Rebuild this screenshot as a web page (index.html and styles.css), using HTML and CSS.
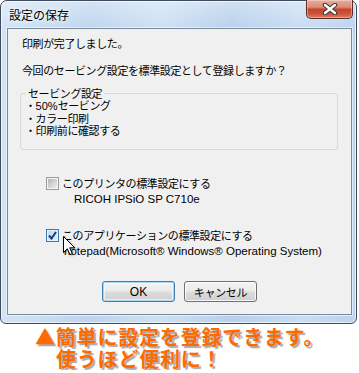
FILE: index.html
```html
<!DOCTYPE html>
<html lang="ja">
<head>
<meta charset="utf-8">
<title>設定の保存</title>
<link rel="stylesheet" href="styles.css">
</head>
<body>
<div class="window">
  <div class="titlebar">
    <span class="title">設定の保存</span>
    <div class="close">
      <svg width="16" height="12" viewBox="0 0 16 12"><path d="M3 2 L13 10 M13 2 L3 10" stroke="#3a3a3a" stroke-width="4.5" stroke-linecap="round"/><path d="M3 2 L13 10 M13 2 L3 10" stroke="#fff" stroke-width="2.4" stroke-linecap="round"/></svg>
    </div>
  </div>
  <div class="panel">
    <p class="msg msg1">印刷が完了しました。</p>
    <p class="msg msg2">今回のセービング設定を標準設定として登録しますか？</p>
    <fieldset class="group">
      <legend>セービング設定</legend>
      <div class="item">・<span class="lat">50%</span>セービング</div>
      <div class="item">・カラー印刷</div>
      <div class="item">・印刷前に確認する</div>
    </fieldset>
    <div class="check-row r1"><span class="box off"></span><span>このプリンタの標準設定にする</span></div>
    <div class="sub sub1">RICOH IPSiO SP C710e</div>
    <div class="check-row r2"><span class="box on"><svg width="9" height="9" viewBox="0 0 9 9"><path d="M1 4.5 L3.5 7.5 L8 1" fill="none" stroke="#1c3a7c" stroke-width="2"/></svg></span><span>このアプリケーションの標準設定にする</span></div>
    <div class="sub sub2">notepad(Microsoft® Windows® Operating System)</div>
    <div class="buttons">
      <button class="btn default">OK</button>
      <button class="btn">キャンセル</button>
    </div>
    <svg class="cursor" width="14" height="21" viewBox="0 0 14 21"><path d="M1.5 1.5 L1.5 17.5 L5.3 13.8 L8 19.5 L10.3 18.5 L7.7 12.8 L12.8 12.8 Z" fill="#fff" stroke="#000" stroke-width="1" stroke-linejoin="miter"/></svg>
  </div>
</div>
<div class="caption">
  <div class="line1">▲簡単に設定を登録できます。</div>
  <div class="line2">使うほど便利に！</div>
</div>
</body>
</html>
```

FILE: styles.css
```css
html, body {
  margin: 0;
  padding: 0;
  background: #fff;
}

body {
  font-family: "Noto Sans CJK JP", "Noto Sans", sans-serif;
  color: #000;
}

.window {
  position: relative;
  width: 357px;
  box-sizing: border-box;
  border: 1px solid #3f4b5c;
  border-radius: 7px 7px 6px 6px;
  padding: 0 4px 8px 6px;
  background:
    linear-gradient(180deg, rgba(255,255,255,0.35), rgba(255,255,255,0) 28px),
    linear-gradient(90deg, #d3e3f5 0%, #bed5ee 25%, #cde0f4 45%, #b8d0eb 65%, #c9ddf3 85%, #bcd3ee 100%);
  box-shadow: inset 0 0 0 1px rgba(255,255,255,0.65);
}

.titlebar {
  height: 27px;
  display: flex;
  align-items: flex-start;
  justify-content: space-between;
}

.title {
  margin-top: 6px;
  padding-left: 2px;
  font-size: 12px;
  line-height: 16px;
  letter-spacing: 0;
  text-shadow: 0 0 6px #fff, 0 0 3px #fff;
}

.close {
  width: 47px;
  height: 19px;
  box-sizing: border-box;
  margin-top: -1px;
  margin-right: -1px;
  border: 1px solid #5a2d2a;
  border-top: none;
  border-radius: 0 0 5px 5px;
  background: linear-gradient(180deg, #e9ab9b 0%, #dc8b77 40%, #c6432f 52%, #cb5238 75%, #dc7a5e 100%);
  box-shadow: inset 0 0 0 1px rgba(255,255,255,0.35);
  display: flex;
  align-items: center;
  justify-content: center;
}

.panel {
  position: relative;
  background: #f0f0f0;
  border: 1px solid #7b8a9b;
  box-shadow: 0 0 0 1px rgba(255,255,255,0.55);
  padding: 7px 0 12px 0;
  font-size: 11px;
  letter-spacing: -0.4px;
}

.msg {
  margin: 0;
  padding-left: 14px;
  line-height: 14px;
}

.msg2 {
  margin-top: 13px;
}

.group {
  margin: 10px 13px 0 12px;
  padding: 0 0 13px 4px;
  border: 1px solid #d3dae0;
  border-radius: 3px;
  min-width: 0;
}

.group legend {
  padding: 0 2px;
  margin-left: 1px;
  line-height: 12px;
  font-size: 11px;
}

.item {
  line-height: 12px;
}

.lat {
  letter-spacing: 0;
  font-family: "Liberation Sans", sans-serif;
}

.check-row {
  display: flex;
  align-items: center;
  gap: 3px;
  padding-left: 38px;
  line-height: 14px;
  height: 14px;
}

.r1 {
  margin-top: 26px;
}

.r2 {
  margin-top: 22px;
}

.box {
  width: 13px;
  height: 13px;
  box-sizing: border-box;
  display: flex;
  align-items: center;
  justify-content: center;
  flex: none;
}

.box.off {
  border: 1px solid #9a9a9a;
  box-shadow: inset 0 0 0 1px #f6f6f6;
  background: linear-gradient(135deg, #a9adb1 0%, #d8d8d8 60%, #eeeeee 100%);
}

.box.on {
  border: 1px solid #3b78b0;
  box-shadow: inset 0 0 0 1px #e8f4fb;
  background: linear-gradient(135deg, #b9dcf3 0%, #def0fb 100%);
}

.sub {
  margin-top: 2px;
  line-height: 14px;
  letter-spacing: 0;
  font-family: "Liberation Sans", sans-serif;
  font-size: 11.5px;
}

.sub1 {
  padding-left: 66px;
}

.sub2 {
  padding-left: 56px;
}

.buttons {
  margin-top: 23px;
  display: flex;
  justify-content: center;
  gap: 9px;
}

.btn {
  width: 73px;
  height: 21px;
  box-sizing: border-box;
  margin: 0;
  padding: 0;
  border: 1px solid #707070;
  border-radius: 3px;
  background: linear-gradient(180deg, #f3f3f3 0%, #ebebeb 48%, #dddddd 52%, #cfcfcf 100%);
  box-shadow: inset 0 0 0 1px rgba(255,255,255,0.8);
  font-family: "Noto Sans CJK JP", sans-serif;
  font-size: 11px;
  letter-spacing: -0.3px;
  line-height: 18px;
  color: #000;
}

.btn.default {
  border-color: #3c7fb1;
  box-shadow: inset 0 0 0 1px #a5d6f2, inset 0 0 0 2px rgba(255,255,255,0.6);
  font-family: "Liberation Sans", sans-serif;
  font-size: 12px;
  letter-spacing: 0;
}

.cursor {
  position: absolute;
  left: 54px;
  top: 206px;
  filter: drop-shadow(1px 1px 1px rgba(0,0,0,0.35));
}

.caption {
  padding-top: 2px;
  font-family: "Noto Sans CJK JP", sans-serif;
  font-weight: 700;
  font-size: 20px;
  line-height: 22px;
  letter-spacing: 0.8px;
  color: #ff6a00;
  text-shadow: 2px 2px 1px #a9a9a9;
}

.line1 {
  padding-left: 35px;
}

.line2 {
  padding-left: 56px;
}
```
